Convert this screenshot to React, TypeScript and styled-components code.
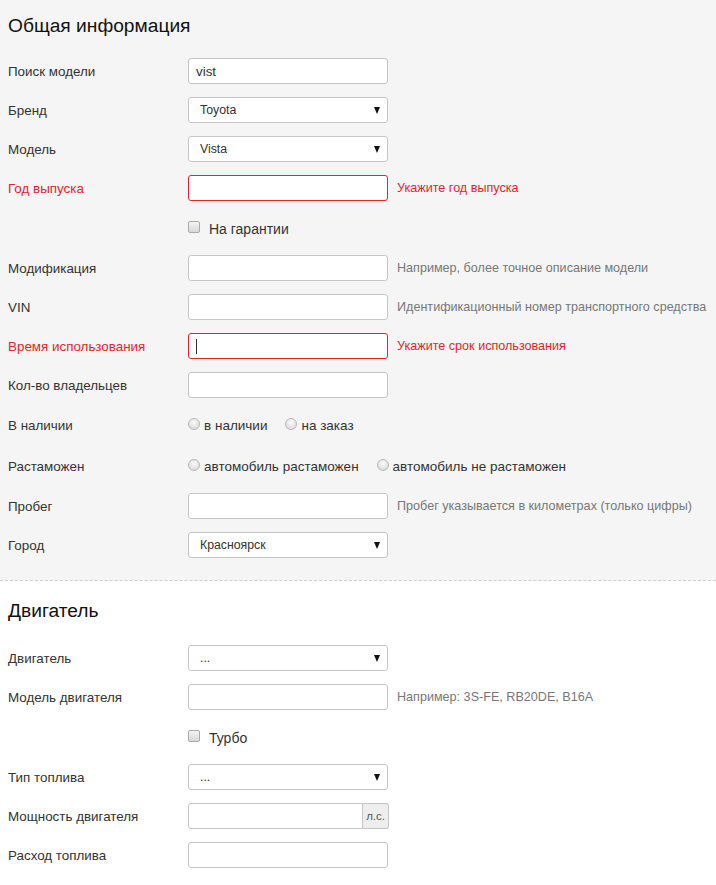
import React from "react"
import styled, { createGlobalStyle } from "styled-components"

const GlobalStyle = createGlobalStyle`
    body {
        margin: 0;
        background: #ffffff;
        font-family: "Liberation Sans", Arial, sans-serif;
        color: #333;
    }
`

const Section = styled.section<{ $grey?: boolean }>`
    background: ${(p) => (p.$grey ? "#f5f5f5" : "#ffffff")};
    border-bottom: ${(p) => (p.$grey ? "1px dashed #cfcfcf" : "none")};
    padding: ${(p) => (p.$grey ? "13px" : "17px")} 8px 22px 8px;
`

const Title = styled.h2<{ $gap?: number }>`
    margin: 0 0 ${(p) => p.$gap ?? 19}px 0;
    font-size: 19.2px;
    font-weight: 400;
    line-height: 26px;
    color: #111;
`

const Rows = styled.div`
    display: flex;
    flex-direction: column;
    gap: 13px;
`

const Row = styled.div<{ $tall?: boolean }>`
    display: grid;
    grid-template-columns: 180px 200px auto;
    align-items: center;
    min-height: ${(p) => (p.$tall ? "28px" : "26px")};
`

const Label = styled.label<{ $error?: boolean }>`
    font-size: 13.4px;
    color: ${(p) => (p.$error ? "#e4262a" : "#333")};
`

const Input = styled.div<{ $error?: boolean; $addon?: boolean }>`
    box-sizing: border-box;
    height: 26px;
    background: #fff;
    border: 1px solid ${(p) => (p.$error ? "#e4262a" : "#c6c6c6")};
    border-radius: ${(p) => (p.$addon ? "3px 0 0 3px" : "3px")};
    padding: 0 7px;
    display: flex;
    align-items: center;
    font-size: 13.4px;
    color: #333;
    flex: 1;
`

const Caret = styled.span`
    display: inline-block;
    width: 1px;
    height: 15px;
    background: #333;
`

const Select = styled.div`
    box-sizing: border-box;
    height: 26px;
    background: #fff;
    border: 1px solid #c6c6c6;
    border-radius: 3px;
    padding: 0 7px 0 11px;
    display: flex;
    align-items: center;
    justify-content: space-between;
    font-size: 12.3px;
    color: #333;
`

const Arrow = styled.span`
    width: 0;
    height: 0;
    border-left: 3.5px solid transparent;
    border-right: 3.5px solid transparent;
    border-top: 7px solid #111;
    margin-top: 1px;
`

const Group = styled.div`
    display: flex;
`

const Addon = styled.div`
    box-sizing: border-box;
    height: 26px;
    padding: 0 3px;
    display: flex;
    align-items: center;
    background: #eee;
    border: 1px solid #c6c6c6;
    border-left: none;
    border-radius: 0 3px 3px 0;
    font-size: 11.5px;
    color: #555;
    margin-right: -1px;
`

const Hint = styled.span<{ $error?: boolean }>`
    padding-left: 9px;
    font-size: 12.6px;
    color: ${(p) => (p.$error ? "#e4262a" : "#777")};
    white-space: nowrap;
`

const Check = styled.label`
    grid-column: 2 / 4;
    display: flex;
    align-items: center;
    gap: 9px;
    font-size: 14px;
    color: #333;
    padding-top: 1px;
`

const Box = styled.span`
    box-sizing: border-box;
    width: 12px;
    height: 12px;
    border: 1px solid #aaa;
    border-radius: 2px;
    background: linear-gradient(#f4f4f4, #d8d8d8);
    margin-top: -3px;
`

const Radios = styled.div`
    display: flex;
    gap: 18px;
    grid-column: 2 / 4;
`

const Radio = styled.label`
    display: flex;
    align-items: center;
    gap: 4px;
    font-size: 13.5px;
    color: #333;
    white-space: nowrap;
`

const Dot = styled.span`
    box-sizing: border-box;
    width: 12px;
    height: 12px;
    border-radius: 50%;
    border: 1px solid #b8b8b8;
    background: radial-gradient(circle at 50% 35%, #fafafa, #d4d4d4);
    margin-top: -3px;
`

const App = () => {
    return (
        <>
            <GlobalStyle />
            <Section $grey>
                <Title>Общая информация</Title>
                <Rows>
                    <Row>
                        <Label>Поиск модели</Label>
                        <Input>vist</Input>
                    </Row>
                    <Row>
                        <Label>Бренд</Label>
                        <Select>Toyota<Arrow /></Select>
                    </Row>
                    <Row>
                        <Label>Модель</Label>
                        <Select>Vista<Arrow /></Select>
                    </Row>
                    <Row>
                        <Label $error>Год выпуска</Label>
                        <Input $error />
                        <Hint $error>Укажите год выпуска</Hint>
                    </Row>
                    <Row $tall>
                        <span />
                        <Check><Box />На гарантии</Check>
                    </Row>
                    <Row>
                        <Label>Модификация</Label>
                        <Input />
                        <Hint>Например, более точное описание модели</Hint>
                    </Row>
                    <Row>
                        <Label>VIN</Label>
                        <Input />
                        <Hint>Идентификационный номер транспортного средства</Hint>
                    </Row>
                    <Row>
                        <Label $error>Время использования</Label>
                        <Input $error><Caret /></Input>
                        <Hint $error>Укажите срок использования</Hint>
                    </Row>
                    <Row>
                        <Label>Кол-во владельцев</Label>
                        <Input />
                    </Row>
                    <Row $tall>
                        <Label>В наличии</Label>
                        <Radios>
                            <Radio><Dot />в наличии</Radio>
                            <Radio><Dot />на заказ</Radio>
                        </Radios>
                    </Row>
                    <Row $tall>
                        <Label>Растаможен</Label>
                        <Radios>
                            <Radio><Dot />автомобиль растаможен</Radio>
                            <Radio><Dot />автомобиль не растаможен</Radio>
                        </Radios>
                    </Row>
                    <Row>
                        <Label>Пробег</Label>
                        <Input />
                        <Hint>Пробег указывается в километрах (только цифры)</Hint>
                    </Row>
                    <Row>
                        <Label>Город</Label>
                        <Select>Красноярск<Arrow /></Select>
                    </Row>
                </Rows>
            </Section>
            <Section>
                <Title $gap={21}>Двигатель</Title>
                <Rows>
                    <Row>
                        <Label>Двигатель</Label>
                        <Select>...<Arrow /></Select>
                    </Row>
                    <Row>
                        <Label>Модель двигателя</Label>
                        <Input />
                        <Hint>Например: 3S-FE, RB20DE, B16A</Hint>
                    </Row>
                    <Row $tall>
                        <span />
                        <Check><Box />Турбо</Check>
                    </Row>
                    <Row>
                        <Label>Тип топлива</Label>
                        <Select>...<Arrow /></Select>
                    </Row>
                    <Row>
                        <Label>Мощность двигателя</Label>
                        <Group>
                            <Input $addon />
                            <Addon>л.с.</Addon>
                        </Group>
                    </Row>
                    <Row>
                        <Label>Расход топлива</Label>
                        <Input />
                    </Row>
                </Rows>
            </Section>
        </>
    )
}

export default App
